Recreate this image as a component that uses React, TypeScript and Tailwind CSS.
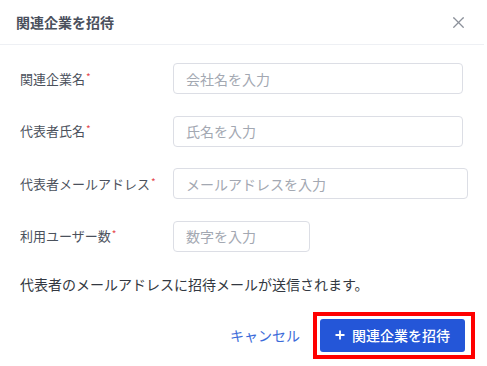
import { X } from "lucide-react";

const font = { fontFamily: '"Noto Sans CJK JP", "Noto Sans", sans-serif' };

type Field = { label: string; placeholder: string; width: string };

const fields: Field[] = [
  { label: "関連企業名", placeholder: "会社名を入力", width: "w-[290px]" },
  { label: "代表者氏名", placeholder: "氏名を入力", width: "w-[290px]" },
  { label: "代表者メールアドレス", placeholder: "メールアドレスを入力", width: "w-[295px]" },
  { label: "利用ユーザー数", placeholder: "数字を入力", width: "w-[137px]" },
];

export default function App() {
  return (
    <div className="h-[366px] w-[487px] bg-white" style={font}>
      <div className="w-[484px] bg-white">
        <header className="flex h-[45px] items-center justify-between border-b border-[#eef0f4] pl-4 pr-[16px]">
          <h1 className="text-[14px] font-bold text-[#4a505c]">関連企業を招待</h1>
          <button type="button" className="text-[#8b909a]">
            <X size={19} strokeWidth={1.6} />
          </button>
        </header>

        <div className="px-5 pt-[18px]">
          <div className="flex flex-col gap-[21.5px]">
            {fields.map((f) => (
              <div key={f.label} className="flex items-center">
                <label className="w-[153px] shrink-0 text-[13px] text-[#4b515c]">
                  {f.label}
                  <span className="relative -top-[3px] ml-[1px] text-[10px] text-[#e5484d]">*</span>
                </label>
                <input
                  placeholder={f.placeholder}
                  className={`${f.width} h-[31px] shrink-0 rounded-[4px] border border-[#dcdee5] px-[12px] text-[14px] text-[#374151] outline-none placeholder:text-[#a3a8b2]`}
                />
              </div>
            ))}
          </div>

          <p className="mt-[22px] text-[14px] leading-5 text-[#333841]">
            代表者のメールアドレスに招待メールが送信されます。
          </p>
        </div>

        <footer className="mt-[25px] flex items-center justify-end gap-5 pr-[19px]">
          <button type="button" className="text-[14px] text-[#3b6bd9]">
            キャンセル
          </button>
          <div className="relative">
            <button
              type="button"
              className="flex h-[33px] w-[145px] items-center justify-center gap-[7px] rounded-[3px] bg-[#2456d8] text-[14px] font-medium text-white"
            >
              <svg width="10" height="10" viewBox="0 0 10 10" className="shrink-0">
                <path d="M5 0.5v9M0.5 5h9" stroke="white" strokeWidth="1.8" />
              </svg>
              関連企業を招待
            </button>
            <div className="pointer-events-none absolute -bottom-[7px] -left-[7px] -right-[10px] -top-[7px] border-4 border-[#ff0000]" />
          </div>
        </footer>
      </div>
    </div>
  );
}
